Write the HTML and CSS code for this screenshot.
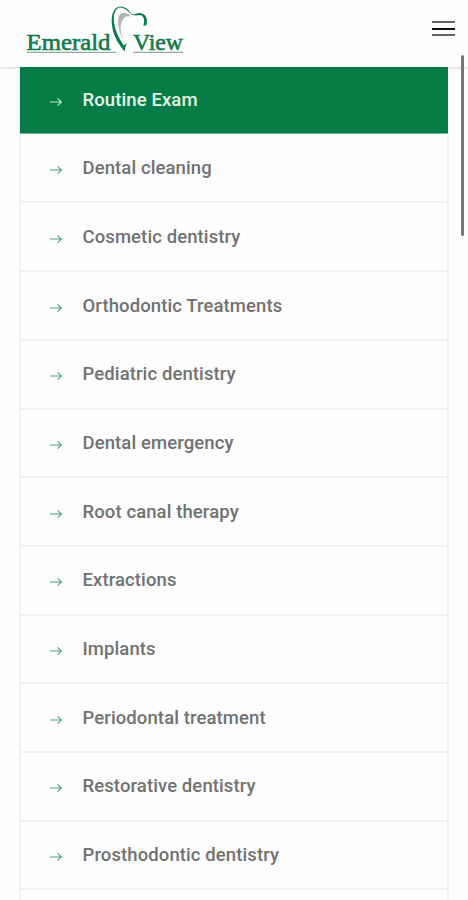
FILE: index.html
```
<!DOCTYPE html>
<html lang="en">
<head>
    <meta charset="UTF-8">
    <meta name="viewport" content="width=device-width, initial-scale=1.0">
    <title>Emerald View</title>
    <link rel="stylesheet" href="styles.css">
</head>
<body>

<!-- Shared arrow icon -->
<svg class="sprite" width="0" height="0">
    <symbol id="arrow" viewBox="0 0 14 12">
        <path d="M1 6H12.3M8.6 2.3L12.4 6L8.6 9.7" fill="none" stroke="currentColor" stroke-width="1.1"/>
    </symbol>
</svg>

<header class="header">
    <a class="logo" href="#">
        <svg width="160" height="52" viewBox="26 4 160 52">
            <text class="logo-text" x="26.5" y="50" textLength="84" lengthAdjust="spacingAndGlyphs">Emerald</text>
            <text class="logo-text" x="133" y="50" textLength="50" lengthAdjust="spacingAndGlyphs">View</text>
            <path d="M26.5 52.4H116M133 52.4H183" stroke="#8fa99b" stroke-width="1.3"/>
            <path d="M131 16.5C127 12 121 11.500 118.800 16C117 21 118.500 32 123.500 40C119.500 31 120 24 123 19.500C124.500 16.500 127 15.500 131 16.500Z" fill="#b4b6b6"/>
            <path d="M132 14.300C127 7 120.500 4 115.500 8.500C110 14 111 27 115 36.500C117.500 42.500 121 47 124.800 51.800C124.800 48.500 125.500 46 127.300 43L123.800 45.500C118 37 114.500 29 113.900 21C113.400 14 115.500 8.200 119.500 7.500C124 7 127.500 11 132 14.300Z" fill="#087a49"/>
            <path d="M129.500 13C134 16 137.500 12.500 141 13.200C146 14.500 148.200 18.500 146.300 25.500H143.300C145 20.500 144 16.500 141 15.300C137.500 14.500 134 17 129.500 13Z" fill="#087a49"/>
        </svg>
    </a>
    <button class="menu-btn" aria-label="Menu">
        <span></span>
        <span></span>
        <span></span>
    </button>
</header>

<ul class="services">
    <li class="service active"><svg class="arrow"><use href="#arrow"/></svg><a>Routine Exam</a></li>
    <li class="service"><svg class="arrow"><use href="#arrow"/></svg><a>Dental cleaning</a></li>
    <li class="service"><svg class="arrow"><use href="#arrow"/></svg><a>Cosmetic dentistry</a></li>
    <li class="service"><svg class="arrow"><use href="#arrow"/></svg><a>Orthodontic Treatments</a></li>
    <li class="service"><svg class="arrow"><use href="#arrow"/></svg><a>Pediatric dentistry</a></li>
    <li class="service"><svg class="arrow"><use href="#arrow"/></svg><a>Dental emergency</a></li>
    <li class="service"><svg class="arrow"><use href="#arrow"/></svg><a>Root canal therapy</a></li>
    <li class="service"><svg class="arrow"><use href="#arrow"/></svg><a>Extractions</a></li>
    <li class="service"><svg class="arrow"><use href="#arrow"/></svg><a>Implants</a></li>
    <li class="service"><svg class="arrow"><use href="#arrow"/></svg><a>Periodontal treatment</a></li>
    <li class="service"><svg class="arrow"><use href="#arrow"/></svg><a>Restorative dentistry</a></li>
    <li class="service"><svg class="arrow"><use href="#arrow"/></svg><a>Prosthodontic dentistry</a></li>
</ul>

<!-- Scroll indicator -->
<div class="scroll-thumb"></div>

</body>
</html>
```
FILE: styles.css
```
* {
    box-sizing: border-box;
}
body {
    font-family: Roboto, Arial, sans-serif;
    margin: 0;
    height: 900px;
    overflow: hidden;
    background-color: #fefefe;
}
.sprite {
    display: block;
}
.header {
    display: flex;
    justify-content: space-between;
    align-items: flex-start;
    height: 67px;
    padding: 4px 13px 0 26px;
    background-color: #fefefe;
    box-shadow: 0 1px 3px rgba(0, 0, 0, 0.18);
}
.logo svg {
    display: block;
}
.logo-text {
    font-family: "Liberation Serif", serif;
    font-size: 24px;
    fill: #12794c;
    stroke: #12794c;
    stroke-width: 0.6px;
}
.menu-btn {
    display: flex;
    flex-direction: column;
    gap: 4.5px;
    width: 23px;
    margin-top: 17px;
    padding: 0;
    border: none;
    background: none;
}
.menu-btn span {
    width: 23px;
    height: 2px;
    background-color: #666;
}
.menu-btn span:nth-child(2) {
    background-color: #111;
}
.services {
    position: relative;
    list-style: none;
    width: 430px;
    height: 833px;
    margin: 0 0 0 19px;
    padding: 0;
    border: solid #f1f1f1;
    border-width: 0 2px;
}
.service {
    display: flex;
    align-items: center;
    height: 68.7px;
    padding-left: 28px;
    border-bottom: 2px solid #f1f1f1;
    color: #717171;
    font-size: 18.5px;
    font-weight: 500;
    letter-spacing: 0.1px;
}
.service.active {
    height: 66.7px;
    margin: 0 -1px 1.1px;
    padding-left: 29px;
    border-bottom: 1px solid #75b895;
    background-color: #067d46;
    color: #e6f5e6;
}
.arrow {
    width: 14px;
    height: 12px;
    margin: 4px 19.500px 0 0;
    color: #46a17d;
}
.active .arrow {
    color: #c5e8d0;
}
.scroll-thumb {
    position: absolute;
    top: 55px;
    right: 4px;
    width: 3px;
    height: 181px;
    border-radius: 2px;
    background-color: #777;
}
```
